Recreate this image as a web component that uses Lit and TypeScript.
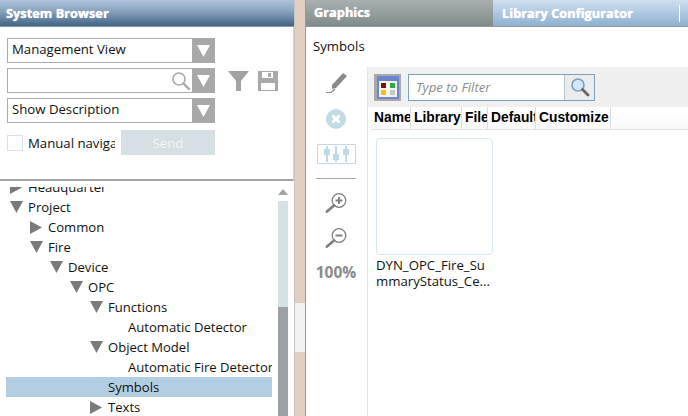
import { LitElement, html, css, svg } from "lit";
import { customElement } from "lit/decorators.js";

const rows: [string, number, string, boolean?][] = [
  ["Headquarter", 0, "r"],
  ["Project", 0, "d"],
  ["Common", 1, "r"],
  ["Fire", 1, "d"],
  ["Device", 2, "d"],
  ["OPC", 3, "d"],
  ["Functions", 4, "d"],
  ["Automatic Detector", 5, ""],
  ["Object Model", 4, "d"],
  ["Automatic Fire Detector", 5, ""],
  ["Symbols", 4, "", true],
  ["Texts", 4, "r"],
];

const mag = (c: string) => svg`<svg width="20" height="20" viewBox="0 0 20 20"><circle cx="8" cy="8" r="6" fill="none" stroke="${c}" stroke-width="1.6"/><path d="M12.5 12.5L18 18" stroke="${c}" stroke-width="2.4" stroke-linecap="round"/></svg>`;

@customElement("app-root")
export class AppRoot extends LitElement {
  static styles = css`
    :host { display: block; width: 688px; height: 416px; overflow: hidden; font-family: "Open Sans", "Noto Sans", sans-serif; font-size: 13.2px; color: #111; }
    .root { display: flex; width: 688px; height: 416px; background: #fff; }
    .left { width: 294px; display: flex; flex-direction: column; flex: none; }
    .split { width: 12px; flex: none; display: flex; flex-direction: column; background: #fff; border-left: 1px solid #c6c6c6; border-right: 1px solid #9a9a9a; box-sizing: border-box; }
    .bei { background: #e2cfc0; }
    .b1 { height: 303px; }
    .b2 { height: 49px; background: #f2f2f2; }
    .b3 { flex: 1; }
    .right { flex: 1; display: flex; flex-direction: column; min-width: 0; }
    .hd { height: 27px; flex: none; box-sizing: border-box; color: #fff; font-weight: 700; font-size: 12.8px; line-height: 26px; border-bottom: 1px solid #8a9aaa; }
    .hd-sys { padding-left: 6px; background: linear-gradient(#b0c5dc, #86a0bb 45%, #436485); text-shadow: 0 0 1px #fff; }
    .top { height: 154px; flex: none; box-sizing: border-box; border-bottom: 2px solid #a3a3a3; padding: 11px 0 0 7px; display: flex; flex-direction: column; gap: 5px; border-right: 1px solid #d4d4d4; }
    .line { display: flex; align-items: center; }
    .combo { width: 208px; height: 25px; box-sizing: border-box; border: 1px solid #ababab; border-right: 0; display: flex; align-items: center; padding-left: 4px; }
    .combo span { flex: 1; margin-bottom: 4px; }
    .arrow { width: 23px; height: 25px; background: #a8a8a8; display: flex; align-items: center; justify-content: center; flex: none; }
    .mg { display: flex; margin-right: 1px; }
    .icons { display: flex; gap: 9px; margin-left: 13px; align-items: center; }
    .chkrow { display: flex; align-items: center; margin-top: 2px; height: 25px; }
    .chk { width: 16px; height: 16px; box-sizing: border-box; border: 1px solid #dcdee8; flex: none; }
    .chklbl { width: 87px; margin-left: 5px; margin-right: 6px; overflow: hidden; white-space: nowrap; }
    .send { width: 94px; height: 25px; background: #d6e0e4; color: #f3f6f7; display: flex; align-items: center; justify-content: center; }
    .treewrap { flex: 1; display: flex; overflow: hidden; min-height: 0; }
    .tree { width: 266px; margin: 6px 6px 0 6px; flex: none; overflow: hidden; }
    .list { margin-top: -10px; }
    .row { height: 20px; line-height: 20px; display: flex; align-items: center; white-space: nowrap; font-size: 13.1px; }
    .row.sel { background: #b3cee3; }
    .tw { width: 20px; height: 20px; display: flex; align-items: center; justify-content: center; flex: none; margin-right: 2px; }
    .sb { width: 10px; display: flex; flex-direction: column; flex: none; }
    .up { height: 20px; display: flex; align-items: center; justify-content: center; box-sizing: border-box; padding-top: 1px; }
    .trk { height: 106px; background: #d6e1e4; }
    .thm { flex: 1; background: #9ba1a4; }
    .tabs { display: flex; height: 27px; flex: none; border-bottom: 1px solid #8d9aa5; box-sizing: border-box; }
    .t1 { width: 187px; box-sizing: border-box; padding-left: 8px; color: #fff; font-weight: 700; font-size: 12.8px; line-height: 24px; background: linear-gradient(#a9b0b0, #7f8c8a); text-shadow: 0 0 1px #fff; }
    .t2 { flex: 1; box-sizing: border-box; padding-left: 9px; padding-right: 8px; color: #fff; font-weight: 700; font-size: 12.8px; line-height: 24px; background: linear-gradient(#d0e0f0, #8fb0d2); display: flex; justify-content: space-between; align-items: center; text-shadow: 0 0 1px #fff; }
    .t2 i { width: 1px; height: 17px; background: #fff; }
    .title { height: 40px; flex: none; box-sizing: border-box; padding-left: 7px; line-height: 38px; }
    .main { flex: 1; display: flex; min-height: 0; }
    .rail { width: 61px; flex: none; display: flex; flex-direction: column; align-items: center; box-sizing: border-box; padding: 6px 1px 0 0; }
    .rail > div { display: flex; justify-content: center; }
    .sep { width: 40px; height: 1px; background: #a8a8a8; }
    .rail .g16 { margin-top: 16px; }
    .rail .g15 { margin-top: 15px; }
    .rail .g14 { margin-top: 14px; }
    .pct { font-weight: 700; color: #8a8a8a; font-size: 15.5px; margin-top: 13px; }
    .cont { flex: 1; min-width: 0; border-left: 1px solid #e4e4e4; }
    .bar { height: 40px; background: #f0f0f0; display: flex; align-items: center; padding-left: 6px; box-sizing: border-box; }
    .lib { width: 27px; height: 27px; background: #a9a9a9; display: flex; align-items: center; justify-content: center; }
    .filter { margin-left: 7px; width: 187px; height: 27px; box-sizing: border-box; border: 1px solid #7b9fbd; background: #fff; display: flex; align-items: center; }
    .filter span { flex: 1; color: #8a8a8a; font-style: italic; padding-left: 7px; }
    .fbtn { width: 29px; height: 25px; background: #ececec; border-left: 1px solid #b8c4cc; display: flex; align-items: center; justify-content: center; }
    .cols { margin-left: 3px; height: 23px; display: flex; background: linear-gradient(#fff, #fafafa); border-bottom: 1px solid #e4e4e4; box-sizing: border-box; }
    .col { box-sizing: border-box; border-right: 1px solid #dcdcdc; font-family: "Liberation Sans", sans-serif; font-weight: 700; font-size: 13.8px; line-height: 22px; color: #000; overflow: hidden; white-space: nowrap; padding-left: 3px; }
    .card { margin: 8px 0 0 8px; width: 117px; }
    .thumb { height: 117px; box-sizing: border-box; border: 1px solid #d7e6f2; border-radius: 4px; background: #fff; }
    .cap { margin-top: 2px; line-height: 16px; word-break: break-all; }
  `;

  private tri(dir: string, c = "#7a7a7a") {
    if (dir === "d") return svg`<svg width="13" height="12" viewBox="0 0 13 12"><path d="M0 0H13L6.5 12Z" fill="${c}"/></svg>`;
    if (dir === "r") return svg`<svg width="12" height="13" viewBox="0 0 12 13"><path d="M0 0L12 6.5L0 13Z" fill="${c}"/></svg>`;
    return "";
  }

  private arrow() {
    return html`<div class="arrow"><svg width="13" height="12" viewBox="0 0 13 12"><path d="M0 0H13L6.5 12Z" fill="#fff"/></svg></div>`;
  }

  render() {
    const cols: [string, number][] = [["Name", 40], ["Library", 51], ["File", 26], ["Default", 48], ["Customize", 75]];
    return html`<div class="root">
      <div class="left">
        <div class="hd hd-sys">System Browser</div>
        <div class="top">
          <div class="line"><div class="combo"><span>Management View</span>${this.arrow()}</div></div>
          <div class="line"><div class="combo"><span></span><div class="mg">${mag("#a8a8a8")}</div>${this.arrow()}</div>
            <div class="icons">
              <svg width="21" height="20" viewBox="0 0 21 20"><path d="M0 0H21L13 10V20H8V10Z" fill="#a3a3a3"/></svg>
              <svg width="20" height="20" viewBox="0 0 20 20"><path fill-rule="evenodd" d="M0 0H20V20H0ZM4 1V7H15V1ZM3 12V19H17V12Z" fill="#a8a8a8"/><rect x="10" y="2" width="3" height="4" fill="#a8a8a8"/></svg>
            </div></div>
          <div class="line"><div class="combo"><span>Show Description</span>${this.arrow()}</div></div>
          <div class="chkrow"><div class="chk"></div><div class="chklbl">Manual navigation</div><div class="send">Send</div></div>
        </div>
        <div class="treewrap">
          <div class="tree"><div class="list">
            ${rows.map(([t, d, k, s]) => html`<div class="row ${s ? "sel" : ""}" style="padding-left:${d * 20}px"><div class="tw">${this.tri(k)}</div><span>${t}</span></div>`)}
          </div></div>
          <div class="sb">
            <div class="up"><svg width="10" height="6" viewBox="0 0 10 6"><path d="M5 0L10 6H0Z" fill="#a3a3a3"/></svg></div>
            <div class="trk"></div><div class="thm"></div>
          </div>
        </div>
      </div>
      <div class="split"><div class="bei b1"></div><div class="b2"></div><div class="bei b3"></div></div>
      <div class="right">
        <div class="tabs"><div class="t1">Graphics</div><div class="t2"><span>Library Configurator</span><i></i></div></div>
        <div class="title">Symbols</div>
        <div class="main">
          <div class="rail">
            <div><svg width="21" height="20" viewBox="0 0 21 20"><path d="M17 0L21 3L10 15L6 16L6 12Z" fill="#8a8a8a"/><path d="M0 19.5H5L9 16" fill="none" stroke="#8a8a8a" stroke-width="1.2"/></svg></div>
            <div class="g16"><svg width="20" height="20" viewBox="0 0 20 20"><circle cx="10" cy="10" r="10" fill="#c3dce4"/><path d="M6.5 6.5L13.5 13.5M13.5 6.5L6.5 13.5" stroke="#fff" stroke-width="3"/></svg></div>
            <div class="g15"><svg width="39" height="20" viewBox="0 0 39 20"><path d="M.5 .5H38.5V19.5H.5Z" fill="#fff" stroke="#bcdbe4"/><g fill="#bcdbe4"><rect x="9" y="2" width="2" height="16"/><rect x="18" y="2" width="2" height="16"/><rect x="28" y="2" width="2" height="16"/><rect x="7" y="5" width="6" height="6"/><rect x="16" y="10" width="6" height="6"/><rect x="26" y="5" width="6" height="6"/></g></svg></div>
            <div class="sep g14"></div>
            <div class="g14"><svg width="22" height="20" viewBox="0 0 22 20"><circle cx="14" cy="7.5" r="6.8" fill="#fff" stroke="#808080" stroke-width="1.3"/><path d="M10.5 7.5H17.5M14 4V11" stroke="#808080" stroke-width="2"/><path d="M9 12.5L2 18.5" stroke="#808080" stroke-width="2.8" stroke-linecap="round"/></svg></div>
            <div class="g15"><svg width="22" height="20" viewBox="0 0 22 20"><circle cx="14" cy="7.5" r="6.8" fill="#fff" stroke="#808080" stroke-width="1.3"/><path d="M10.5 7.5H17.5" stroke="#808080" stroke-width="2"/><path d="M9 12.5L2 18.5" stroke="#808080" stroke-width="2.8" stroke-linecap="round"/></svg></div>
            <div class="pct">100%</div>
          </div>
          <div class="cont">
            <div class="bar">
              <div class="lib"><svg width="22" height="23" viewBox="0 0 22 23"><rect width="22" height="23" fill="#6f84cf"/><rect x="2" y="5" width="18" height="16" fill="#f7f4ea"/><rect x="4" y="7" width="5" height="5" fill="#7a0f0f"/><rect x="13" y="7" width="5" height="5" fill="#2eaa4a"/><rect x="4" y="14" width="5" height="5" fill="#f4c20d"/><rect x="13" y="14" width="5" height="5" fill="#c6c6c6"/></svg></div>
              <div class="filter"><span>Type to Filter</span><div class="fbtn"><svg width="20" height="20" viewBox="0 0 20 20"><circle cx="8" cy="8" r="6" fill="#d6e8f5" stroke="#6fa0c5" stroke-width="1.6"/><path d="M12.5 12.5L18 18" stroke="#666" stroke-width="2.8" stroke-linecap="round"/></svg></div></div>
            </div>
            <div class="cols">${cols.map(([n, w]) => html`<div class="col" style="width:${w}px">${n}</div>`)}</div>
            <div class="card"><div class="thumb"></div><div class="cap">DYN_OPC_Fire_SummaryStatus_Ce...</div></div>
          </div>
        </div>
      </div>
    </div>`;
  }
}
